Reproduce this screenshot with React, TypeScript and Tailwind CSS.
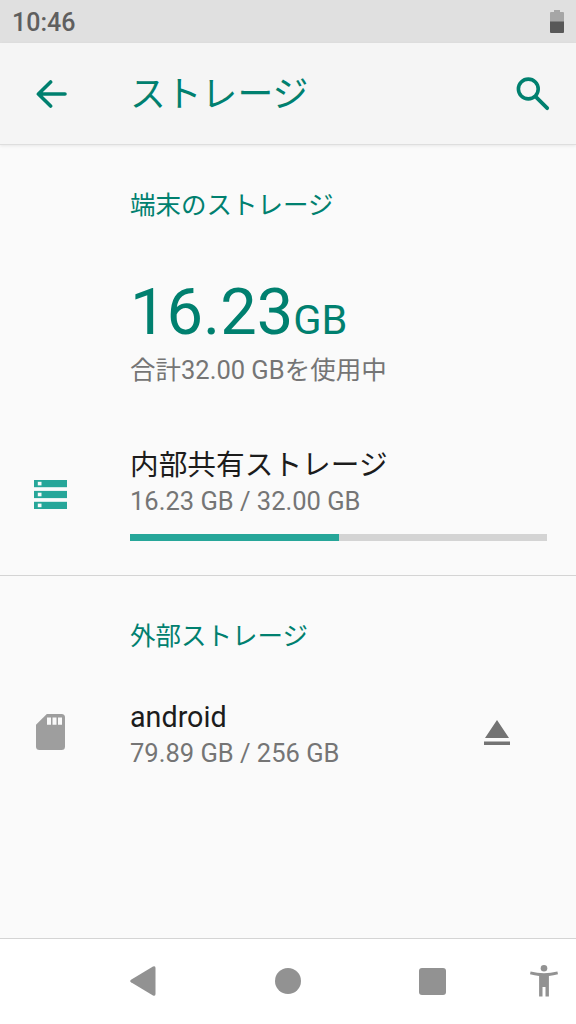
type Volume = { name: string; used: string; total: string }

const INTERNAL: Volume = { name: '内部共有ストレージ', used: '16.23', total: '32.00' }
const SD_CARD: Volume = { name: 'android', used: '79.89', total: '256' }

function BackIcon() {
  return (
    <svg width="32" height="30" viewBox="0 0 32 30" fill="none" stroke="#00806f" strokeWidth="3.6" strokeLinecap="round" strokeLinejoin="round">
      <path d="M29 15H3M14.600 3 2.400 15l12.200 12" />
    </svg>
  )
}

function SearchIcon() {
  return (
    <svg width="34" height="34" viewBox="0 0 34 34" fill="none" stroke="#00806f" strokeWidth="3.6">
      <circle cx="12.3" cy="12" r="9.9" />
      <path d="M20.600 20.600 31.200 31.200" strokeWidth="3.8" strokeLinecap="round" />
    </svg>
  )
}

function BatteryIcon() {
  return (
    <svg width="14" height="24" viewBox="0 0 14 24">
      <path d="M4 0h6v2h3q1 0 1 1v9H0V3q0-1 1-1h3z" fill="#a6a6a6" />
      <path d="M0 11.500h14V22q0 1-1 1H1q-1 0-1-1z" fill="#585858" />
    </svg>
  )
}

function StorageIcon() {
  return (
    <svg width="33" height="29" viewBox="0 0 33 29">
      {[0, 10.9, 21.8].map((y) => (
        <g key={y}>
          <rect y={y} width="33" height="7.2" fill="#26a699" />
          <rect x="3.8" y={y + 1.8} width="3.7" height="3.6" fill="#fafafa" />
        </g>
      ))}
    </svg>
  )
}

function SdCardIcon() {
  return (
    <svg width="29" height="36" viewBox="0 0 29 36">
      <path d="M10.800 0H25.500q3.500 0 3.500 3.500V32.500q0 3.500-3.500 3.500H3.500Q0 36 0 32.500V10.800z" fill="#9e9e9e" />
      <path d="M11 3.600h4v7.200h-4zM16.500 3.600h4v7.200h-4zM22 3.600h4v7.200h-4z" fill="#fafafa" />
    </svg>
  )
}

function EjectIcon() {
  return (
    <svg width="26" height="26" viewBox="0 0 26 26" fill="#737373">
      <path d="M13 0 25 18H1zM0 21.500h26v3.600H0z" />
    </svg>
  )
}

function AccessibilityIcon() {
  return (
    <svg width="28" height="32" viewBox="0 0 28 32" fill="#929292">
      <circle cx="14" cy="3.300" r="3.300" />
      <path d="M.6 6.500Q14 10.100 27.400 6.500L28 9.300Q23.500 10.600 18.900 11V31.500H15.500V22H12.500V31.500H9.100V11Q4.500 10.600 0 9.300z" />
    </svg>
  )
}

function VolumeText({ volume }: { volume: Volume }) {
  return (
    <div>
      <p className="h-9 text-[28.7px] leading-9 text-[#1c1c1c]">{volume.name}</p>
      <p className="h-9 text-[25.500px] leading-9 text-[#757575]">
        {volume.used} GB / {volume.total} GB
      </p>
    </div>
  )
}

export default function App() {
  return (
    <div lang="ja" className="flex h-[1024px] w-[576px] flex-col overflow-hidden bg-[#fafafa] font-['Roboto','Noto_Sans_CJK_JP',sans-serif] whitespace-nowrap">
      <div className="flex h-[43px] shrink-0 items-center justify-between bg-[#e0e0e0] pr-3 pl-3">
        <span className="pt-[3px] text-[25px] font-medium text-[#5f5f5f]">10:46</span>
        <BatteryIcon />
      </div>

      <header className="flex h-[102px] shrink-0 items-center border-b border-[#dedede] bg-[#f5f5f5] pr-[26px] pl-9 shadow-[0_1px_3px_rgba(0,0,0,0.08)]">
        <BackIcon />
        <h1 className="ml-[62px] flex-1 pt-0.5 text-[35.800px] leading-10 text-[#00806f]">ストレージ</h1>
        <SearchIcon />
      </header>

      <main className="flex flex-1 flex-col">
        <section className="flex h-[431px] flex-col border-b border-[#d4d4d4] pr-[29px] pt-[42px]">
          <h2 className="h-9 pl-[130px] text-[25.500px] leading-9 text-[#00806f]">端末のストレージ</h2>
          <p className="mt-[49px] h-[80px] pl-[130px] text-[65px] leading-[80px] text-[#00806f]">
            16.23<span className="text-[41.500px]">GB</span>
          </p>
          <p className="h-9 pl-[130px] text-[25.500px] leading-9 text-[#757575]">合計32.00 GBを使用中</p>
          <div className="mt-[59px] flex">
            <div className="flex w-[130px] shrink-0 pt-[33px] pl-[34px]">
              <StorageIcon />
            </div>
            <div className="flex-1">
              <VolumeText volume={INTERNAL} />
              <div className="mt-[15px] h-[7px] bg-[#d4d4d4]">
                <div className="h-full w-1/2 bg-[#26a699]" />
              </div>
            </div>
          </div>
        </section>

        <section className="flex flex-col pt-[42px]">
          <h2 className="h-9 pl-[130px] text-[25.500px] leading-9 text-[#00806f]">外部ストレージ</h2>
          <div className="mt-[45px] flex items-center">
            <div className="flex w-[130px] shrink-0 pb-[7px] pl-9">
              <SdCardIcon />
            </div>
            <div className="flex-1">
              <VolumeText volume={SD_CARD} />
            </div>
            <button className="mr-[66px] pb-[5px]" aria-label="取り出し">
              <EjectIcon />
            </button>
          </div>
        </section>
      </main>

      <nav className="flex h-[86px] shrink-0 items-center border-t border-[#d4d4d4] bg-white pb-px pl-[130px]">
        <svg width="26" height="30" viewBox="0 0 26 30" fill="#929292">
          <path d="M23 .600Q25.500-.5 25.500 2V28Q25.500 30.500 23 29.400L1 16.300Q-.6 15 1 13.700z" />
        </svg>
        <div className="ml-[119px] size-[26px] rounded-full bg-[#929292]" />
        <div className="ml-[118px] size-[27px] rounded-[3px] bg-[#929292]" />
        <div className="ml-[84px]">
          <AccessibilityIcon />
        </div>
      </nav>
    </div>
  )
}
